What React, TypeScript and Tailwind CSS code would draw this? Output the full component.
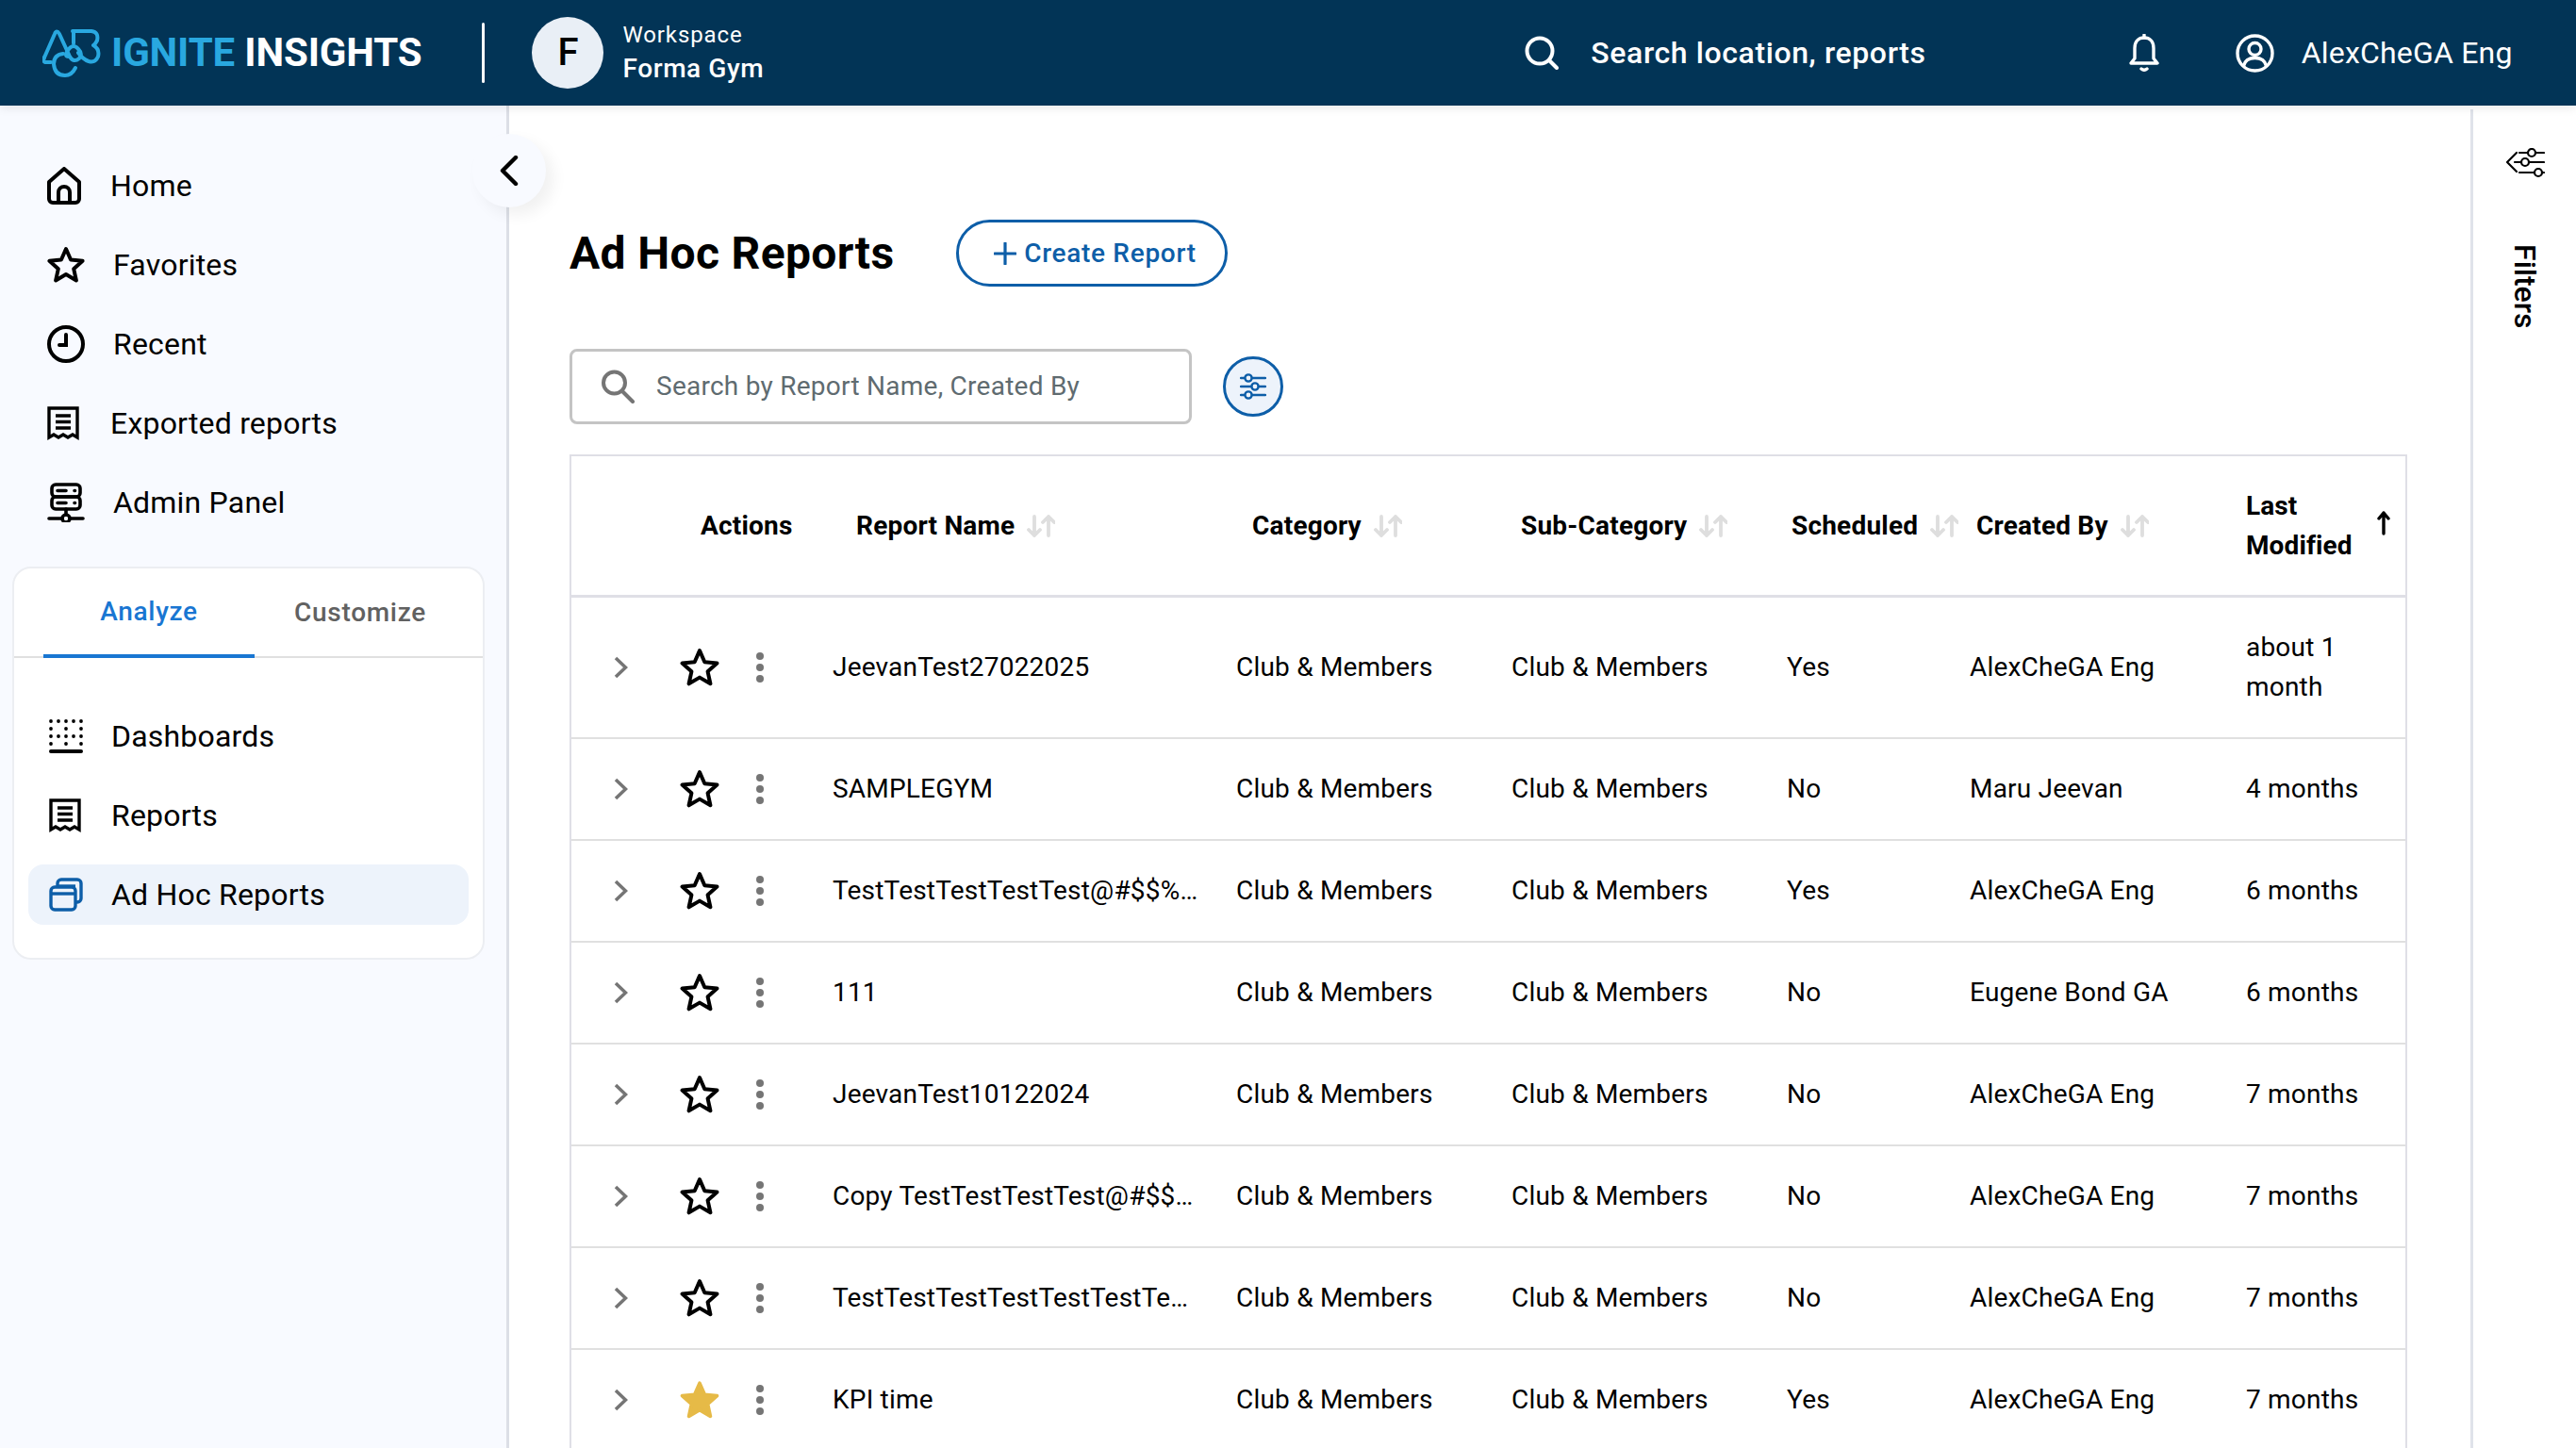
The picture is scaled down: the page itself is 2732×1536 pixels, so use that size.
import type { ReactNode } from "react";

const rows = [
  { name: "JeevanTest27022025", scheduled: "Yes", by: "AlexCheGA Eng", when: "about 1 month" },
  { name: "SAMPLEGYM", scheduled: "No", by: "Maru Jeevan", when: "4 months" },
  { name: "TestTestTestTestTest@#$$%^&*()_Report", scheduled: "Yes", by: "AlexCheGA Eng", when: "6 months" },
  { name: "111", scheduled: "No", by: "Eugene Bond GA", when: "6 months" },
  { name: "JeevanTest10122024", scheduled: "No", by: "AlexCheGA Eng", when: "7 months" },
  { name: "Copy TestTestTestTest@#$$%^&*()_Report", scheduled: "No", by: "AlexCheGA Eng", when: "7 months" },
  { name: "TestTestTestTestTestTestTestTestTest", scheduled: "No", by: "AlexCheGA Eng", when: "7 months" },
  { name: "KPI time", scheduled: "Yes", by: "AlexCheGA Eng", when: "7 months", fav: true },
];

const gridCols = "grid grid-cols-[277px_428px_292px_292px_194px_293px_167px]";

function starPoints(cx: number, cy: number, R: number, r: number) {
  const pts: string[] = [];
  for (let i = 0; i < 10; i++) {
    const a = (Math.PI / 5) * i - Math.PI / 2;
    const d = i % 2 === 0 ? R : r;
    pts.push(`${(cx + d * Math.cos(a)).toFixed(2)},${(cy + d * Math.sin(a)).toFixed(2)}`);
  }
  return pts.join(" ");
}

function Logo() {
  return (
    <svg className="shrink-0" width="62" height="52" viewBox="0 0 62 52" fill="none" stroke="#29a8e0" strokeWidth="4" strokeLinecap="round" strokeLinejoin="round">
      <path d="M2 31 L13 6 Q15 1 18 6 L29 30 Q33 37 39 32 Q43 27 38 22 Q33 16 28 22 Q22 30 28 30" />
      <path d="M9 36 H3 Q0 35 2 31" />
      <path d="M32 3 H52 Q60 4 58 13 Q56 17 54 18 Q61 22 59 30 Q56 37 49 35 Q43 33 38 26" />
      <path d="M33 3 V16" />
      <path d="M22 27 Q12 28 12 38 Q13 50 24 50 Q31 50 35 42" />
    </svg>
  );
}

function HomeIcon() {
  return (
    <svg width="36" height="40" viewBox="0 0 36 40" fill="none" stroke="#000" strokeWidth="4" strokeLinejoin="round">
      <path d="M2 16 L18 2 L34 16 V34 a4 4 0 0 1 -4 4 H6 a4 4 0 0 1 -4 -4 Z" />
      <path d="M12 38 V27 a6 6 0 0 1 12 0 V38" />
    </svg>
  );
}

function StarOutline({ size = 40, width = 4 }: { size?: number; width?: number }) {
  return (
    <svg width={size} height={size} viewBox="0 0 40 40" fill="none" stroke="#000" strokeWidth={width * (40 / size)} strokeLinejoin="round">
      <polygon points={starPoints(20, 21.5, 18.5, 8.6)} />
    </svg>
  );
}

function StarFilled() {
  return (
    <svg width="42" height="42" viewBox="0 0 40 40" fill="#e6ba47" stroke="#e6ba47" strokeWidth="3.5" strokeLinejoin="round">
      <polygon points={starPoints(20, 21.5, 18.5, 8.6)} />
    </svg>
  );
}

function ClockIcon() {
  return (
    <svg width="40" height="40" viewBox="0 0 40 40" fill="none" stroke="#000" strokeWidth="4" strokeLinecap="round">
      <circle cx="20" cy="20" r="18" />
      <path d="M20 10 V21 H13" />
    </svg>
  );
}

function ReceiptIcon() {
  return (
    <svg width="34" height="36" viewBox="0 0 34 36" fill="none" stroke="#000" strokeWidth="3.4">
      <path d="M2 2 H32 V33 L27 30 L22 33 L17 30 L12 33 L7 30 L2 33 Z" strokeLinejoin="miter" />
      <path d="M9 10 H25 M9 16.5 H25 M9 23 H25" strokeWidth="3.4" />
    </svg>
  );
}

function AdminIcon() {
  return (
    <svg width="40" height="42" viewBox="0 0 40 42" fill="none" stroke="#000" strokeWidth="3.6" strokeLinecap="round">
      <rect x="5" y="2" width="30" height="13" rx="4" />
      <rect x="5" y="15" width="30" height="13" rx="4" />
      <path d="M11 8.5 H20 M11 21.5 H20" />
      <path d="M29 8.5 H29.5 M29 21.5 H29.5" />
      <path d="M20 28 V34 M2 38 H16 M24 38 H38" />
      <circle cx="20" cy="38" r="4" />
    </svg>
  );
}

function DashboardIcon() {
  const full = [2, 10, 18, 26, 34];
  const part = [2, 18, 34];
  return (
    <svg width="36" height="36" viewBox="0 0 36 36" fill="#000">
      {[2, 10, 18, 26].map((y, i) =>
        (i % 2 === 0 ? full : part).map((x) => <circle key={`${x}-${y}`} cx={x} cy={y} r="1.9" />)
      )}
      <rect x="0" y="32" width="36" height="4" rx="2" />
    </svg>
  );
}

function AdHocIcon() {
  return (
    <svg width="36" height="36" viewBox="0 0 36 36" fill="none" stroke="#0d5ea8" strokeWidth="3.4" strokeLinejoin="round">
      <rect x="2" y="10" width="26" height="24" rx="4" />
      <path d="M2 17 H28" />
      <path d="M9 9 V6 a4 4 0 0 1 4 -4 H30 a4 4 0 0 1 4 4 V22 a4 4 0 0 1 -4 4 H28" />
      <path d="M9 9 H28" />
    </svg>
  );
}

function SlidersIcon({ color, width = 2.4 }: { color: string; width?: number }) {
  return (
    <svg width="28" height="28" viewBox="0 0 28 28" fill="none" stroke={color} strokeWidth={width} strokeLinecap="round">
      <path d="M1 5 H5 M13 5 H27 M1 14 H12 M20 14 H27 M1 23 H5 M13 23 H27" />
      <circle cx="9" cy="5" r="3.6" />
      <circle cx="16" cy="14" r="3.6" />
      <circle cx="9" cy="23" r="3.6" />
    </svg>
  );
}

function SortIcon({ className = "" }: { className?: string }) {
  return (
    <svg className={className} width="30" height="24" viewBox="0 0 30 24" fill="none" stroke="#dedede" strokeWidth="3.8" strokeLinecap="round" strokeLinejoin="round">
      <path d="M8 2 V22 M2 16 L8 22 L14 16" />
      <path d="M23 22 V2 M17 8 L23 2 L29 8" />
    </svg>
  );
}

function NavItem({ icon, label, gap }: { icon: ReactNode; label: string; gap: string }) {
  return (
    <div className={`flex h-[84px] items-center pl-[50px] ${gap}`}>
      <span className="flex w-[40px] justify-start">{icon}</span>
      <span className="text-[32px] tracking-[0.2px] text-black">{label}</span>
    </div>
  );
}

function SubItem({ icon, label, active }: { icon: ReactNode; label: string; active?: boolean }) {
  return (
    <div className={`flex h-[64px] items-center gap-[28px] rounded-[16px] pl-[20px] ${active ? "bg-[#edf3fb]" : ""}`}>
      <span className="flex w-[40px] justify-start pl-[2px]">{icon}</span>
      <span className="text-[32px] tracking-[0.2px] text-black">{label}</span>
    </div>
  );
}

function HeadCell({ label, className, sort = true }: { label: string; className: string; sort?: boolean }) {
  return (
    <div className={`flex items-center text-[28px] font-bold tracking-[0.2px] text-black ${className}`}>
      <span>{label}</span>
      {sort && <SortIcon className="ml-[13px]" />}
    </div>
  );
}

export default function App() {
  return (
    <div className="flex h-[1536px] w-[2732px] flex-col overflow-hidden bg-white font-['Roboto',sans-serif]">
      <header className="relative z-10 flex h-[112px] shrink-0 items-center whitespace-nowrap bg-[#023456] pl-[45px] shadow-[0_2px_10px_rgba(0,0,0,0.1)]">
        <Logo />
        <div className="ml-[11px] text-[42px] font-bold leading-none tracking-[-0.15px]">
          <span className="text-[#29a8e0]">IGNITE</span> <span className="text-white">INSIGHTS</span>
        </div>
        <div className="ml-[64px] h-[64px] w-[3px] shrink-0 rounded-full bg-white" />
        <div className="ml-[50px] flex h-[76px] w-[76px] shrink-0 items-center justify-center rounded-full bg-[#e9eff6] text-[40px] font-medium text-black">
          F
        </div>
        <div className="ml-[20px] flex flex-col text-white">
          <span className="text-[24px] leading-[34px] tracking-[0.9px]">Workspace</span>
          <span className="text-[28px] font-medium leading-[38px] tracking-[0.6px]">Forma Gym</span>
        </div>
        <div className="ml-[807px] flex items-center gap-[34px]">
          <svg width="36" height="36" viewBox="0 0 36 36" fill="none" stroke="#fff" strokeWidth="4" strokeLinecap="round">
            <circle cx="16" cy="16" r="13.5" />
            <path d="M26 26 L34 34" />
          </svg>
          <span className="text-[32px] font-medium tracking-[0.6px] text-white">Search location, reports</span>
        </div>
        <svg className="ml-[215px] shrink-0" width="32" height="40" viewBox="0 0 32 40" fill="none" stroke="#fff" strokeWidth="3.4" strokeLinejoin="round" strokeLinecap="round">
          <path d="M2 31 L6 26 V15 C6 8 10 4 16 4 C22 4 26 8 26 15 V26 L30 31 Z" />
          <path d="M16 1 V4" />
          <path d="M13 37 Q16 39.5 19 37" />
        </svg>
        <svg className="ml-[81px] shrink-0" width="41" height="41" viewBox="0 0 41 41" fill="none" stroke="#fff" strokeWidth="3.4">
          <circle cx="20.5" cy="20.5" r="18.5" />
          <circle cx="20.5" cy="16" r="6.5" />
          <path d="M8.5 34 C10 27 15 25.5 20.5 25.5 C26 25.5 31 27 32.5 34" />
        </svg>
        <span className="ml-[29px] text-[32px] tracking-[0.2px] text-white">AlexCheGA Eng</span>
      </header>

      <div className="flex min-h-0 flex-1">
        <aside className="relative w-[540px] shrink-0 border-r-[3px] border-[#dcdfe6] bg-[#f8faff] pt-[43px]">
          <NavItem icon={<HomeIcon />} label="Home" gap="gap-[27px]" />
          <NavItem icon={<StarOutline />} label="Favorites" gap="gap-[30px]" />
          <NavItem icon={<ClockIcon />} label="Recent" gap="gap-[30px]" />
          <NavItem icon={<ReceiptIcon />} label="Exported reports" gap="gap-[27px]" />
          <NavItem icon={<AdminIcon />} label="Admin Panel" gap="gap-[30px]" />

          <div className="ml-[13px] mt-[26px] h-[417px] w-[501px] rounded-[20px] border-2 border-[#eceef2] bg-white">
            <div className="flex h-[95px] border-b-2 border-[#e0e0e0] pl-[31px]">
              <div className="flex h-[95px] w-[224px] items-center justify-center border-b-4 border-[#1976d2] text-[28px] font-medium tracking-[0.7px] text-[#1976d2]">
                Analyze
              </div>
              <div className="flex h-[93px] w-[224px] items-center justify-center text-[28px] font-medium tracking-[0.7px] text-[#616161]">
                Customize
              </div>
            </div>
            <div className="flex flex-col gap-[20px] px-[15px] pt-[51px]">
              <SubItem icon={<DashboardIcon />} label="Dashboards" />
              <SubItem icon={<ReceiptIcon />} label="Reports" />
              <SubItem icon={<AdHocIcon />} label="Ad Hoc Reports" active />
            </div>
          </div>

          <div className="absolute right-[-42px] top-[30px] z-20 flex h-[78px] w-[78px] items-center justify-center rounded-full bg-[#f8faff] shadow-[8px_8px_16px_rgba(0,0,0,0.06)]">
            <svg width="20" height="32" viewBox="0 0 20 32" fill="none" stroke="#000" strokeWidth="4.4" strokeLinecap="round" strokeLinejoin="round">
              <path d="M17 2 L3 16 L17 30" />
            </svg>
          </div>
        </aside>

        <main className="min-w-0 flex-1 pl-[64px] pr-[67px] pt-[121px]">
          <div className="flex h-[71px] items-center">
            <h1 className="text-[48px] font-bold tracking-[0.35px] text-black">Ad Hoc Reports</h1>
            <button className="ml-[66px] flex h-[71px] w-[288px] items-center justify-center gap-[8px] rounded-full border-[3px] border-[#0d5ea8] pl-[6px] text-[28px] font-medium tracking-[0.7px] text-[#0d5ea8]">
              <svg width="24" height="24" viewBox="0 0 24 24" stroke="#0d5ea8" strokeWidth="3.2" strokeLinecap="round">
                <path d="M12 1 V23 M1 12 H23" />
              </svg>
              Create Report
            </button>
          </div>

          <div className="mt-[66px] flex items-center">
            <div className="flex h-[80px] w-[660px] items-center gap-[22px] rounded-[8px] border-[3px] border-[#c4c4c4] pl-[30px] text-[28px] tracking-[0.25px] text-[#5f6b70]">
              <svg width="37" height="36" viewBox="0 0 37 36" fill="none" stroke="#757575" strokeWidth="4" strokeLinecap="round">
                <circle cx="14.5" cy="14" r="11.5" />
                <path d="M23 23 L34 34" />
              </svg>
              <span>Search by Report Name, Created By</span>
            </div>
            <div className="ml-[33px] flex h-[64px] w-[64px] items-center justify-center rounded-full border-[3px] border-[#0d5ea8] bg-[#edf3fb]">
              <SlidersIcon color="#0d5ea8" />
            </div>
          </div>

          <div className="mt-[32px] border-2 border-b-0 border-[#dfdfe6]">
            <div className={`${gridCols} h-[150px] border-b-[3px] border-[#dfdfe6]`}>
              <HeadCell label="Actions" className="pl-[137px]" sort={false} />
              <HeadCell label="Report Name" className="pl-[25px]" />
              <HeadCell label="Category" className="pl-[17px]" />
              <HeadCell label="Sub-Category" className="pl-[10px]" />
              <HeadCell label="Scheduled" className="pl-[5px]" />
              <HeadCell label="Created By" className="pl-[7px]" />
              <div className="flex items-center text-[28px] font-bold leading-[42px] tracking-[0.1px] text-black">
                <span className="w-[130px]">
                  Last
                  <br />
                  Modified
                </span>
                <svg className="mb-[6px] ml-[9px]" width="14" height="26" viewBox="0 0 14 26" fill="none" stroke="#000" strokeWidth="3.4" strokeLinecap="round" strokeLinejoin="round">
                  <path d="M7 24 V2 M2 8 L7 2 L12 8" />
                </svg>
              </div>
            </div>

            {rows.map((row, i) => (
              <div
                key={row.name}
                className={`${gridCols} items-center border-b-2 border-[#e0e0e0] text-[28px] leading-[42px] tracking-[0.2px] text-black ${i === 0 ? "h-[150px]" : "h-[108px]"}`}
              >
                <div className="flex items-center pl-[45px]">
                  <svg width="15" height="24" viewBox="0 0 15 24" fill="none" stroke="#757575" strokeWidth="3.6">
                    <path d="M2 2 L12.5 12 L2 22" />
                  </svg>
                  <span className="ml-[55px] flex w-[42px] justify-center">
                    {row.fav ? <StarFilled /> : <StarOutline size={42} width={4} />}
                  </span>
                  <svg className="ml-[39px]" width="8" height="32" viewBox="0 0 8 32" fill="#757575">
                    <circle cx="4" cy="4" r="4" />
                    <circle cx="4" cy="16" r="4" />
                    <circle cx="4" cy="28" r="4" />
                  </svg>
                </div>
                <div className="max-w-[390px] truncate">{row.name}</div>
                <div>Club &amp; Members</div>
                <div>Club &amp; Members</div>
                <div>{row.scheduled}</div>
                <div>{row.by}</div>
                <div className={i === 0 ? "w-[120px]" : ""}>{row.when}</div>
              </div>
            ))}
          </div>
        </main>

        <aside className="mt-[4px] flex w-[112px] shrink-0 flex-col items-center border-l-[3px] border-[#e0e3ea] pt-[41px]">
          <svg width="42" height="32" viewBox="0 0 42 32" fill="none" stroke="#000" strokeWidth="2.2" strokeLinecap="round" strokeLinejoin="round">
            <path d="M12 6 L2 16 L12 26" transform="translate(0 -1)" />
            <path d="M15 5 H24 M32 5 H41 M10 15 H17 M25 15 H41 M15 26 H31 M39 26 H41" />
            <circle cx="28" cy="5" r="4" />
            <circle cx="21" cy="15" r="4" />
            <circle cx="35" cy="26" r="4" />
          </svg>
          <span className="mt-[70px] text-[32px] font-medium text-black [writing-mode:vertical-rl]">Filters</span>
        </aside>
      </div>
    </div>
  );
}
